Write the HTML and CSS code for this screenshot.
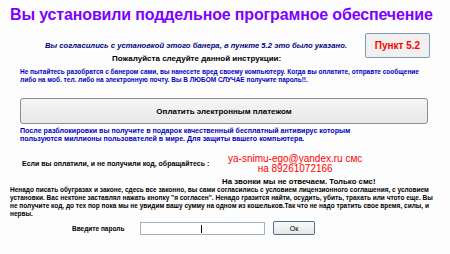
FILE: index.html
```html
<!DOCTYPE html>
<html>
<head>
<meta charset="utf-8">
<link rel="stylesheet" href="styles.css">
</head>
<body>
<div class="page">
  <h1 class="title">Вы установили поддельное програмное обеспечение</h1>
  <div class="row-agree">
    <p class="agree">Вы согласились с установкой этого банера, в пункте 5.2 это было указано.</p>
    <div class="punkt">Пункт 5.2</div>
  </div>
  <p class="follow">Пожалуйста следуйте данной инструкции:</p>
  <p class="warn">Не пытайтесь разобратся с банером сами, вы нанесете вред своему компьютеру. Когда вы оплатите, отправте сообщение<br>либо на моб. тел. либо на электронную почту. Вы В ЛЮБОМ СЛУЧАЕ получите пароль!!.</p>
  <div class="pay">Оплатить электронным платежом</div>
  <p class="after">После разблокировки вы получите в подарок качественный бесплатный антивирус которым<br>пользуются миллионы пользователей в мире. Для защиты вашего компьютера.</p>
  <div class="row-contact">
    <p class="ifpaid">Если вы оплатили, и не получили код, обращайтесь :</p>
    <div class="contact">
      <span>ya-snimu-ego@yandex.ru смс</span>
      <span>на 89261072166</span>
    </div>
  </div>
  <p class="nocalls">На звонки мы не отвечаем. Только смс!</p>
  <p class="law">Ненадо писать обугразах и законе, сдесь все законно, вы сами согласились с условием лицензионного соглашения, с условием установки. Вас нектоне заставлял нажать кнопку "я согласен". Ненадо гразится найти, осудить, убить, трахать или чтото еще. Вы не получите код, до тех пор пока мы не увидим вашу сумму на одном из кошельков.Так что не надо тратить свое время, силы, и нервы.</p>
  <div class="row-pass">
    <span class="passlabel">Введите пароль</span>
    <span class="input"><span class="caret"></span></span>
    <span class="ok">Ок</span>
  </div>
</div>
</body>
</html>
```
FILE: styles.css
```css
html, body { margin: 0; padding: 0; }
body {
  width: 450px; height: 254px; overflow: hidden;
  background: #fdfdfd;
  font-family: "Liberation Sans", Arial, sans-serif;
}
.page { padding: 5px 8px 0 10px; }
p { margin: 0; }
.title {
  margin: 0; font-size: 16px; font-weight: bold; color: #8000ff;
  line-height: 20px; white-space: nowrap; letter-spacing: -0.15px;
}
.row-agree { display: flex; align-items: center; margin-top: 8px; }
.agree {
  flex: 0 0 320px; margin-left: 35px; font-size: 7.7px; font-style: italic; font-weight: bold;
  color: #000080; white-space: nowrap;
}
.punkt {
  flex: 0 0 65px; height: 25px; box-sizing: border-box;
  border: 1px solid #7f9db9; border-radius: 2px; background: #f0f0ee;
  color: #f00; font-size: 10px; font-weight: bold;
  display: flex; align-items: center; justify-content: center;
}
.follow {
  margin: -4px 0 0 102px; font-size: 8px; font-weight: bold; color: #000;
}
.warn {
  margin: 5px 0 0 10px; font-size: 6.5px; font-weight: bold; color: #0000c0;
  line-height: 8px; white-space: nowrap;
}
.pay {
  margin: 14px 0 0 10px; width: 408px; height: 26px; box-sizing: border-box;
  border: 1px solid #8c8c8c; border-radius: 3px;
  background: linear-gradient(#f6f6f6, #e8e8e8);
  font-size: 8px; font-weight: bold; color: #000;
  display: flex; align-items: center; justify-content: center;
}
.after {
  margin: 3px 0 0 10px; font-size: 7.1px; font-weight: bold; color: #0000c0;
  line-height: 8px; white-space: nowrap;
}
.row-contact { display: flex; align-items: flex-start; margin-top: 11px; }
.ifpaid {
  flex: 0 0 206px; margin: 6px 0 0 12px; font-size: 7px; font-weight: bold; color: #000; white-space: nowrap;
}
.contact {
  display: flex; flex-direction: column; align-items: center;
  font-size: 10px; color: #f00; line-height: 10px; white-space: nowrap;
}
.nocalls {
  margin: 3px 0 0 212px; font-size: 7.8px; font-weight: bold; color: #000;
}
.law {
  margin-top: 0px; font-size: 6.5px; font-weight: bold; color: #000; line-height: 8px;
}
.row-pass { display: flex; align-items: center; margin: 3px 0 0 62px; }
.passlabel { flex: 0 0 68px; font-size: 6.5px; font-weight: bold; color: #000; white-space: nowrap; }
.input {
  width: 125px; height: 13px; box-sizing: border-box;
  border: 1px solid #a0b4c8; background: #fff; position: relative;
}
.caret {
  position: absolute; left: 60px; top: 2px; width: 1px; height: 8px; background: #000;
}
.ok {
  margin-left: 8px; width: 42px; height: 14px; box-sizing: border-box;
  border: 1px solid #4f6f93; border-radius: 2px; background: linear-gradient(#fafafa, #e6e6e6);
  font-size: 7px; color: #000; display: flex; align-items: center; justify-content: center;
}
```
